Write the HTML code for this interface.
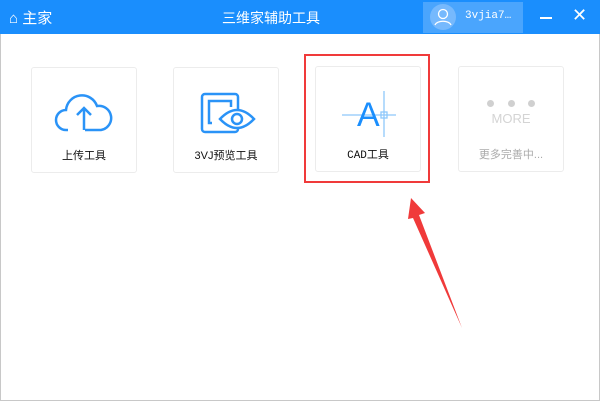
<!DOCTYPE html><html><head><meta charset="utf-8"><style>
body{margin:0;width:600px;height:401px;background:#fff;font-family:"Liberation Sans","Noto Sans CJK SC",sans-serif;position:relative;overflow:hidden}
.hd{position:absolute;left:0;top:0;width:600px;height:34px;background:#1a8efd}
.bd{position:absolute;left:0;top:34px;width:598px;height:366px;border:1px solid #c8c8c8;border-top:none}
.t{position:absolute;color:#fff;font-size:14px}
.card{position:absolute;width:104px;height:104px;border:1px solid #ececec;border-radius:3px;background:#fff}
.lb{position:absolute;left:0;right:0;top:79px;text-align:center;font-size:11px;color:#111}
</style></head><body>
<div class="hd"></div>
<div class="bd"></div>
<div class="t" style="left:9px;top:7px;font-size:15px">⌂ 主家</div>
<div class="t" style="left:222px;top:8px">三维家辅助工具</div>
<div style="position:absolute;left:423px;top:2px;width:100px;height:31px;background:#4aa5fd"></div>
<svg style="position:absolute;left:430px;top:4px" width="26" height="26"><circle cx="13" cy="13" r="13" fill="#76b9fd"/><circle cx="13" cy="10" r="4.5" fill="none" stroke="#fff" stroke-width="1.3"/><path d="M5 21c2-5 14-5 16 0" fill="none" stroke="#fff" stroke-width="1.3"/></svg>
<div class="t" style="left:465px;top:10px;font-size:11px;font-family:'Liberation Mono',monospace">3vjia7…</div>
<div style="position:absolute;left:540px;top:17px;width:12px;height:2px;background:#fff"></div>
<div class="t" style="left:572px;top:5px;font-size:18px">✕</div>
<div class="card" style="left:31px;top:67px"><svg style="position:absolute;left:22px;top:22px" width="60" height="44"><path d="M14 40h-2a10 10 0 0 1 0-20a16 16 0 0 1 31-4a12 12 0 0 1 4 24h-16" fill="none" stroke="#2a93f7" stroke-width="2.5"/><path d="M30 40v-22M23 25l7-7 7 7" fill="none" stroke="#2a93f7" stroke-width="2.5"/></svg><div class="lb">上传工具</div></div>
<div class="card" style="left:173px;top:67px"><svg style="position:absolute;left:24px;top:22px" width="60" height="46"><rect x="4" y="4" width="36" height="38" rx="3" fill="none" stroke="#2a93f7" stroke-width="2.5"/><path d="M14 33h-3v-22h22v6" fill="none" stroke="#2a93f7" stroke-width="2.5"/><path d="M22 29q17-18 34 0q-17 18-34 0z" fill="#fff" stroke="#2a93f7" stroke-width="2.5"/><circle cx="39" cy="29" r="5" fill="none" stroke="#2a93f7" stroke-width="2.5"/></svg><div class="lb">3VJ预览工具</div></div>
<div class="card" style="left:315px;top:66px"><svg style="position:absolute;left:26px;top:22px" width="60" height="50"><path d="M0 26h54M42 2v46" stroke="#8ec8fb" stroke-width="1.3"/><rect x="39" y="23" width="6" height="6" fill="none" stroke="#8ec8fb" stroke-width="1.3"/><text x="15" y="37" font-size="34" fill="#1a8efd" font-family="Liberation Sans">A</text></svg><div class="lb" style="font-family:'Liberation Mono','Noto Sans CJK SC',monospace">CAD工具</div></div>
<div style="position:absolute;left:304px;top:54px;width:122px;height:125px;border:2px solid #f03a3a"></div>
<div class="card" style="left:458px;top:66px"><div style="position:absolute;left:28px;top:33px;width:48px;display:flex;justify-content:space-between"><i style="width:7px;height:7px;border-radius:50%;background:#d0d0d0"></i><i style="width:7px;height:7px;border-radius:50%;background:#d0d0d0"></i><i style="width:7px;height:7px;border-radius:50%;background:#d0d0d0"></i></div><div style="position:absolute;left:0;right:0;top:44px;text-align:center;color:#d4d4d4;font-size:13px">MORE</div><div class="lb" style="color:#aaa">更多完善中...</div></div>
<svg style="position:absolute;left:0;top:0" width="600" height="401"><path d="M411 198L425 213L419 215L462 328L413 218L408 219Z" fill="#f03a3a"/></svg>
</body></html>
